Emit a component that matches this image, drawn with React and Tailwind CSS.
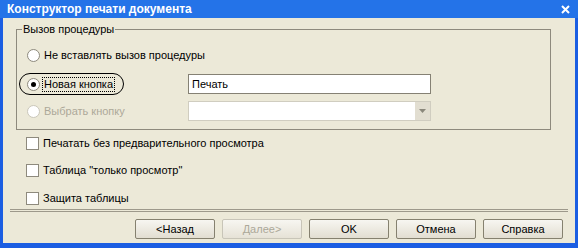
import React from 'react';

const font = "font-['Liberation_Sans',Arial,sans-serif]";

const Radio = ({ checked, disabled }) => (
    <span
        className={`w-[13px] h-[13px] rounded-full border bg-white flex items-center justify-center shrink-0 ${
            disabled ? 'border-[#cac7ba]' : 'border-[#8e8a7d]'
        }`}
    >
        {checked && <span className="w-[5px] h-[5px] rounded-full bg-black" />}
    </span>
);

const Checkbox = ({ label }) => (
    <div className="flex items-center h-[16px] pl-[23px]">
        <span className="w-[13px] h-[13px] border border-[#8e8a7d] bg-white shrink-0" />
        <span className="ml-[4px] text-[11px] text-black">{label}</span>
    </div>
);

const Button = ({ children, disabled }) => (
    <button
        className={`w-[80px] h-[20px] rounded-[2px] border text-[11px] flex items-center justify-center bg-gradient-to-b from-[#f7f6f1] to-[#e2ded1] ${
            disabled ? 'border-[#c8c5b8] text-[#aca899] from-[#efede5] to-[#e6e2d6]' : 'border-[#85816f] text-black'
        }`}
    >
        {children}
    </button>
);

const App = () => {
    return (
        <div className={`w-[578px] h-[248px] flex flex-col ${font}`}>
            {/* title bar */}
            <div className="h-[18px] bg-[#2473e8] flex items-center justify-between pl-[7px] pr-[8px]">
                <span className="text-white font-bold text-[12px] leading-none">Конструктор печати документа</span>
                <svg width="9" height="9" viewBox="0 0 9 9">
                    <path d="M1 1 L8 8 M8 1 L1 8" stroke="white" strokeWidth="2" />
                </svg>
            </div>

            <div className="flex-1 bg-[#ece9d8] border-l-[3px] border-r-[3px] border-b-[5px] border-[#1b5ee2] flex flex-col">
                {/* group box */}
                <div className="relative mt-[11px] ml-[13px] mr-[24px] border border-[#8e8a7d] pt-[15px] pb-[8px]">
                    <span className="absolute -top-[7px] left-[5px] px-[1px] bg-[#ece9d8] text-[11px] leading-[13px] text-black">
                        Вызов процедуры
                    </span>

                    <div className="flex items-center h-[20px] pl-[10px]">
                        <Radio />
                        <span className="ml-[4px] text-[11px] text-black">Не вставлять вызов процедуры</span>
                    </div>

                    <div className="flex items-center h-[22px] mt-[8px]">
                        <div className="w-[171px] h-full flex items-center">
                            <div className="ml-[2px] h-[22px] w-[105px] border border-black rounded-full flex items-center pl-[7px]">
                                <Radio checked />
                                <span className="ml-[2px] px-[1px] border border-dotted border-black text-[11px] leading-[13px] text-black">
                                    Новая кнопка
                                </span>
                            </div>
                        </div>
                        <div className="w-[243px] h-[20px] border border-[#858174] bg-white flex items-center px-[3px] text-[11px] text-black">
                            Печать
                        </div>
                    </div>

                    <div className="flex items-center h-[20px] mt-[6px]">
                        <div className="w-[171px] flex items-center pl-[10px]">
                            <Radio disabled />
                            <span className="ml-[4px] text-[11px] text-[#aca899]">Выбрать кнопку</span>
                        </div>
                        <div className="w-[243px] h-[20px] border border-[#d0cdc0] bg-white flex justify-end">
                            <div className="w-[15px] h-full bg-[#e2ded1] flex items-center justify-center">
                                <svg width="7" height="4" viewBox="0 0 7 4">
                                    <path d="M0 0 H7 L3.5 4 Z" fill="#8a877b" />
                                </svg>
                            </div>
                        </div>
                    </div>
                </div>

                {/* checkboxes */}
                <div className="mt-[5px]">
                    <Checkbox label="Печатать без предварительного просмотра" />
                </div>
                <div className="mt-[11px]">
                    <Checkbox label='Таблица "только просмотр"' />
                </div>
                <div className="mt-[12px]">
                    <Checkbox label="Защита таблицы" />
                </div>

                {/* separator */}
                <div className="mt-[3px] mx-[7px] h-[3px] border-t border-b border-[#9d998b]" />

                {/* buttons */}
                <div className="mt-[7px] flex justify-end gap-[7px] pr-[12px]">
                    <Button>&lt;Назад</Button>
                    <Button disabled>Далее&gt;</Button>
                    <Button>OK</Button>
                    <Button>Отмена</Button>
                    <Button>Справка</Button>
                </div>
            </div>
        </div>
    );
};

export default App;
